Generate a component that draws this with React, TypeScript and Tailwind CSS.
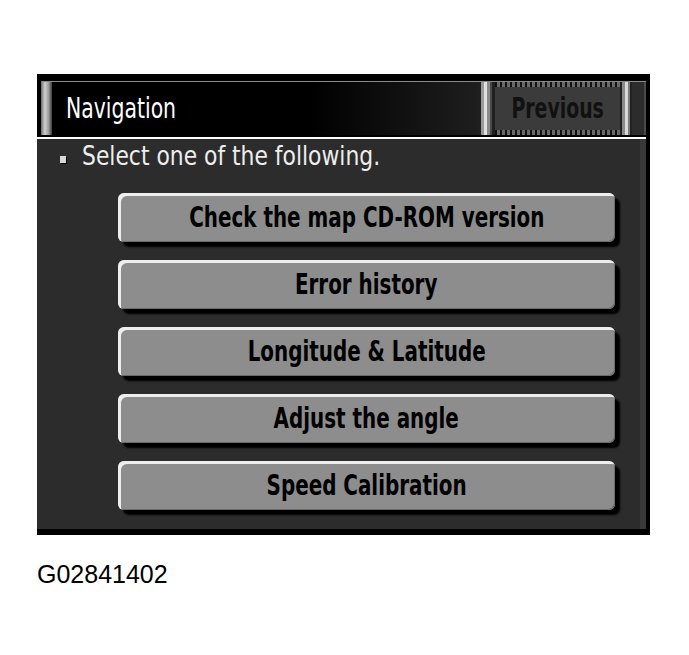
const items = [
  'Check the map CD-ROM version',
  'Error history',
  'Longitude & Latitude',
  'Adjust the angle',
  'Speed Calibration',
];

const narrow = "font-['DejaVu_Sans_Condensed','Liberation_Sans',sans-serif]";

function MenuButton({ label }: { label: string }) {
  return (
    <div className="h-[49px] w-[497px] rounded-[6px] bg-[#8d8d8d] shadow-[inset_3px_3px_0_#eeeeee,inset_-1px_-1px_0_#6a6a6a,5px_5px_2px_#000] flex items-center justify-center">
      <span className={`${narrow} inline-block scale-x-[0.79] font-bold text-[28px] leading-none text-black whitespace-nowrap`}>{label}</span>
    </div>
  );
}

export default function App() {
  return (
    <div className="min-h-screen bg-white pt-[74px] pl-[37px]">
      <div className="w-[613px] h-[461px] bg-black flex flex-col">
        {/* header */}
        <div className="mt-[7px] mx-[4px] h-px bg-[#8a8a8a]" />
        <div className="h-[53px] mx-[4px] flex">
          <div className="w-[11px] bg-[linear-gradient(90deg,#6a6a6a,#d0d0d0_35%,#9a9a9a_70%,#3a3a3a)]" />
          <div className="flex-1 flex items-center pl-[14px] bg-[linear-gradient(90deg,#000_0%,#000_60%,#1e1e1e_100%)]">
            <span className={`${narrow} inline-block origin-left scale-x-[0.81] text-white text-[28px] leading-none whitespace-nowrap`}>Navigation</span>
          </div>
          <div className="w-[16px] bg-[linear-gradient(90deg,#202020_0_2px,#9a9a9a_2px_5px,#e0e0e0_5px_8px,#8a8a8a_8px_11px,#4a4a4a_11px_13px,#202020_13px)]" />
          <div className="w-[125px] bg-[#3b3b3b] flex flex-col">
            <div className="h-[5px] bg-[repeating-linear-gradient(90deg,#111_0_2px,#6a6a6a_2px_5px)]" />
            <div className="flex-1 flex items-center justify-center">
              <span className={`${narrow} inline-block scale-x-[0.75] font-bold text-[#111] text-[28px] leading-none whitespace-nowrap`}>Previous</span>
            </div>
            <div className="h-[5px] bg-[repeating-linear-gradient(90deg,#111_0_2px,#6a6a6a_2px_5px)]" />
          </div>
          <div className="w-[12px] bg-[linear-gradient(90deg,#202020_0_2px,#8a8a8a_2px_5px,#d8d8d8_5px_8px,#7a7a7a_8px_10px,#222_10px)]" />
          <div className="w-[14px] bg-[#2c2c2c] border-r-2 border-[#4a4a4a]" />
        </div>
        <div className="h-[2px]" />
        <div className="h-[2px] mr-[4px] bg-white" />
        {/* body */}
        <div className="h-[390px] mr-[4px] bg-[#2c2c2c] border-r-[6px] border-[#393939] flex flex-col">
          <div className="h-[32px] flex items-center pl-[23px] gap-[16px]">
            <div className="w-[6px] h-[7px] mt-[8px] bg-[#d8d8d8] shadow-[1px_1px_0_#000]" />
            <span className={`${narrow} inline-block origin-left scale-x-[0.9] text-[#eeeeee] text-[27px] leading-none whitespace-nowrap`}>Select one of the following.</span>
          </div>
          <div className="pt-[22px] pl-[81px] flex flex-col gap-[18px]">
            {items.map(item => (
              <MenuButton key={item} label={item} />
            ))}
          </div>
        </div>
      </div>
      <div className="mt-[27px] font-['Liberation_Sans',Arial,sans-serif] text-[25px] leading-none text-black">G02841402</div>
    </div>
  );
}
